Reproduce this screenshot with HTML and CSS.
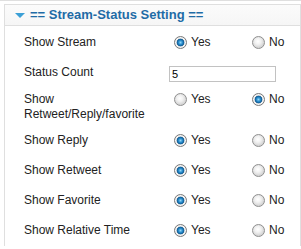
FILE: index.html
```html
<!DOCTYPE html>
<html lang="en">
<head>
	<meta charset="UTF-8">
	<title>Stream-Status Setting</title>
	<link rel="stylesheet" href="styles.css">
</head>
<body>
	<div class="rule"></div>
	<div class="postbox">
		<h3 class="hndle"><span class="toggle"></span>== Stream-Status Setting ==</h3>
		<div class="inside">
			<div class="row">
				<div class="label">Show Stream</div>
				<label class="opt"><input type="radio" name="show_stream" checked>Yes</label>
				<label class="opt"><input type="radio" name="show_stream">No</label>
			</div>
			<div class="row count">
				<div class="label">Status Count</div>
				<input class="text" type="text" value="5">
			</div>
			<div class="row tall">
				<div class="label">Show<br>Retweet/Reply/favorite</div>
				<label class="opt"><input type="radio" name="show_rrf">Yes</label>
				<label class="opt"><input type="radio" name="show_rrf" checked>No</label>
			</div>
			<div class="row">
				<div class="label">Show Reply</div>
				<label class="opt"><input type="radio" name="show_reply" checked>Yes</label>
				<label class="opt"><input type="radio" name="show_reply">No</label>
			</div>
			<div class="row">
				<div class="label">Show Retweet</div>
				<label class="opt"><input type="radio" name="show_retweet" checked>Yes</label>
				<label class="opt"><input type="radio" name="show_retweet">No</label>
			</div>
			<div class="row">
				<div class="label">Show Favorite</div>
				<label class="opt"><input type="radio" name="show_fav" checked>Yes</label>
				<label class="opt"><input type="radio" name="show_fav">No</label>
			</div>
			<div class="row">
				<div class="label">Show Relative Time</div>
				<label class="opt"><input type="radio" name="show_time" checked>Yes</label>
				<label class="opt"><input type="radio" name="show_time">No</label>
			</div>
		</div>
	</div>
</body>
</html>
```

FILE: styles.css
```css
*{
	margin: 0;
	padding: 0;
	box-sizing: border-box;
}
body{
	background-color: #fff;
	font-family: "Liberation Sans", Arial, sans-serif;
	font-size: 12px;
	color: #222;
}
.rule{
	height: 1px;
	background-color: #dfdfdf;
}
.postbox{
	width: 297px;
	margin: 3px 0 0 4px;
	border-left: 1px solid #dfdfdf;
	border-right: 1px solid #dfdfdf;
}
.hndle{
	display: flex;
	align-items: center;
	height: 22px;
	padding-left: 10px;
	border-top: 1px solid #dfdfdf;
	border-bottom: 1px solid #dfdfdf;
	background: linear-gradient(#fbfbfb, #f6f6f6);
	font-size: 13px;
	font-weight: bold;
	color: #1f6ba6;
	line-height: 20px;
}
.toggle{
	width: 0;
	height: 0;
	margin-right: 5px;
	border-left: 5px solid transparent;
	border-right: 5px solid transparent;
	border-top: 5px solid #3b9fd6;
}
.inside{
	padding: 2px 0 0 19px;
}
.row{
	display: grid;
	grid-template-columns: 150px 78px auto;
	align-items: start;
	height: 30px;
	padding-top: 7px;
	line-height: 15px;
}
.row.count{
	height: 27px;
}
.row.tall{
	height: 41px;
}
.opt{
	display: flex;
	align-items: center;
	height: 15px;
}
.opt input{
	appearance: none;
	-webkit-appearance: none;
	width: 13px;
	height: 13px;
	margin-right: 4px;
	border: 1px solid #8f8f8f;
	border-radius: 50%;
	background: radial-gradient(circle at 45% 40%, #ffffff 0, #f1f1f1 3px, #d6d6d6 6px);
}
.opt input:checked{
	border-color: #7a7a7a;
	background: radial-gradient(circle at 50% 50%, #8fd6f7 0, #2a8ccb 2px, #0e5a93 3.5px, #e9e9e9 4.2px, #f6f6f6 5px, #d4d4d4 6px);
}
.text{
	grid-column: 2 / 4;
	width: 107px;
	height: 16px;
	margin: 1px 0 0 -5px;
	padding: 0 2px;
	border: 1px solid #c2c2c2;
	font-family: "Liberation Sans", Arial, sans-serif;
	font-size: 11px;
	color: #000;
	outline: none;
}
```
